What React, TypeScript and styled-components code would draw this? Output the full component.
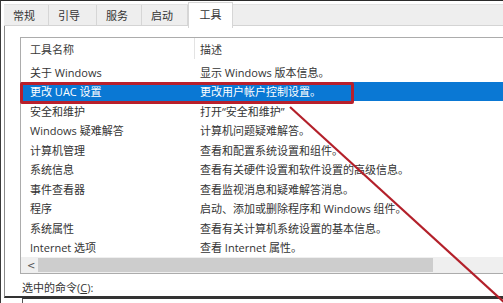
import React from "react";
import styled, { createGlobalStyle } from "styled-components";

const Global = createGlobalStyle`
  html, body { margin: 0; padding: 0; background: #ffffff; overflow: hidden; }
  * { box-sizing: border-box; }
`;

const Frame = styled.div`
  position: relative;
  width: 503px;
  height: 303px;
  overflow: hidden;
  background: #ffffff;
  border-top: 1px solid #2a2a2a;
  border-left: 1px solid #3a3a3a;
  font-family: "Open Sans", "Noto Sans CJK SC", sans-serif;
  font-size: 11px;
  color: #2e2e2e;
  display: flex;
  flex-direction: column;
`;

const TabStrip = styled.div`
  margin-top: 3px;
  margin-left: 3px;
  height: 22px;
  display: flex;
  background: #eeeeee;
  border-bottom: 1px solid #d4d4d4;
  border-top: 1px solid #e2e2e2;
  position: relative;
  z-index: 1;
`;

const Tab = styled.div<{ $w: number; $active?: boolean }>`
  width: ${(p) => p.$w}px;
  display: flex;
  align-items: center;
  justify-content: ${(p) => (p.$active ? "center" : "flex-start")};
  padding-left: ${(p) => (p.$active ? 0 : 9)}px;
  border-right: 1px solid #d6d6d6;
  background: ${(p) => (p.$active ? "#ffffff" : "transparent")};
  color: #333;
  ${(p) =>
    p.$active
      ? `
    margin-top: -3px;
    height: 26px;
    border-left: 1px solid #d6d6d6;
    border-top: 1px solid #d6d6d6;
    padding-bottom: 4px;
  `
      : ""}
`;

const Panel = styled.div`
  margin-left: 3px;
  height: 272px;
  border-left: 1px solid #8a8a8a;
  border-bottom: 2px solid #333;
  padding: 11px 0 0 15px;
  display: flex;
  flex-direction: column;
`;

const ListBox = styled.div`
  width: 540px;
  border: 1px solid #acacac;
  border-right: none;
  display: flex;
  flex-direction: column;
`;

const Header = styled.div`
  height: 21px;
  display: flex;
  align-items: center;
  margin-bottom: 3px;
`;

const HeadCell = styled.div<{ $first?: boolean }>`
  width: ${(p) => (p.$first ? "174px" : "auto")};
  padding-left: ${(p) => (p.$first ? 9 : 5)}px;
  border-right: ${(p) => (p.$first ? "1px solid #e3e3e3" : "none")};
  height: 100%;
  display: flex;
  align-items: center;
  color: #3a3a3a;
`;

const Row = styled.div<{ $sel?: boolean }>`
  height: 19.5px;
  display: flex;
  align-items: center;
  background: ${(p) => (p.$sel ? "#0a78d4" : "transparent")};
  color: ${(p) => (p.$sel ? "#ffffff" : "#333333")};
`;

const Cell = styled.div<{ $first?: boolean }>`
  width: ${(p) => (p.$first ? "174px" : "auto")};
  padding-left: ${(p) => (p.$first ? 9 : 5)}px;
  white-space: nowrap;
`;

const ScrollBar = styled.div`
  height: 16px;
  display: flex;
  align-items: center;
  background: #efefef;
`;

const ScrollArrow = styled.div`
  width: 17px;
  padding-left: 6px;
  font-size: 10px;
  color: #555;
  font-family: "DejaVu Sans", sans-serif;
`;

const Thumb = styled.div`
  width: 395px;
  height: 14px;
  background: #cdcdcd;
`;

const Label = styled.div`
  margin-top: 5px;
  margin-left: 2px;
  color: #333;
  u { text-decoration: underline; }
`;

const BottomBox = styled.div`
  margin-left: 21px;
  flex: 1;
  border-left: 1px solid #555;
  border-top: 1px solid #333;
`;

const Highlight = styled.div`
  position: absolute;
  left: 19px;
  top: 81px;
  width: 334px;
  height: 22px;
  border: 3px solid #b8202c;
  border-radius: 2px;
  pointer-events: none;
`;

const Annot = styled.svg`
  position: absolute;
  left: 0;
  top: 0;
  pointer-events: none;
`;

const rows: [string, string][] = [
  ["关于 Windows", "显示 Windows 版本信息。"],
  ["更改 UAC 设置", "更改用户帐户控制设置。"],
  ["安全和维护", "打开\u201C安全和维护\u201D"],
  ["Windows 疑难解答", "计算机问题疑难解答。"],
  ["计算机管理", "查看和配置系统设置和组件。"],
  ["系统信息", "查看有关硬件设置和软件设置的高级信息。"],
  ["事件查看器", "查看监视消息和疑难解答消息。"],
  ["程序", "启动、添加或删除程序和 Windows 组件。"],
  ["系统属性", "查看有关计算机系统设置的基本信息。"],
  ["Internet 选项", "查看 Internet 属性。"],
];

const tabs: [string, number][] = [
  ["常规", 45],
  ["引导", 48],
  ["服务", 45],
  ["启动", 46],
];

export default function App() {
  return (
    <>
      <Global />
      <Frame>
        <TabStrip>
          {tabs.map(([t, w]) => (
            <Tab key={t} $w={w}>
              {t}
            </Tab>
          ))}
          <Tab $w={45} $active>
            工具
          </Tab>
        </TabStrip>
        <Panel>
          <ListBox>
            <Header>
              <HeadCell $first>工具名称</HeadCell>
              <HeadCell>描述</HeadCell>
            </Header>
            {rows.map(([a, b], i) => (
              <Row key={a} $sel={i === 1}>
                <Cell $first>{a}</Cell>
                <Cell>{b}</Cell>
              </Row>
            ))}
            <ScrollBar>
              <ScrollArrow>&lt;</ScrollArrow>
              <Thumb />
            </ScrollBar>
          </ListBox>
          <Label>
            选中的命令(<u>C</u>):
          </Label>
        </Panel>
        <BottomBox />
        <Highlight />
        <Annot width="503" height="303" viewBox="0 0 503 303">
          <line x1="289" y1="106" x2="504" y2="302" stroke="#b3202a" strokeWidth="2.2" />
        </Annot>
      </Frame>
    </>
  );
}
